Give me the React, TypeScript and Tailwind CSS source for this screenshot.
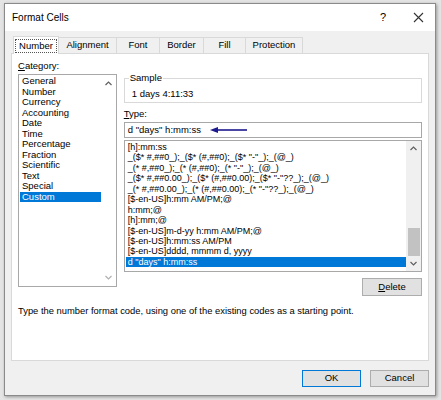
import React from "react";

const categories = [
  "General",
  "Number",
  "Currency",
  "Accounting",
  "Date",
  "Time",
  "Percentage",
  "Fraction",
  "Scientific",
  "Text",
  "Special",
  "Custom",
];

const formats = [
  "[h]:mm:ss",
  '_($* #,##0_);_($* (#,##0);_($* "-"_);_(@_)',
  '_(* #,##0_);_(* (#,##0);_(* "-"_);_(@_)',
  '_($* #,##0.00_);_($* (#,##0.00);_($* "-"??_);_(@_)',
  '_(* #,##0.00_);_(* (#,##0.00);_(* "-"??_);_(@_)',
  "[$-en-US]h:mm AM/PM;@",
  "h:mm;@",
  "[h]:mm;@",
  "[$-en-US]m-d-yy h:mm AM/PM;@",
  "[$-en-US]h:mm:ss AM/PM",
  "[$-en-US]dddd, mmmm d, yyyy",
  'd "days" h:mm:ss',
];

const tabs = ["Number", "Alignment", "Font", "Border", "Fill", "Protection"];
const tabWidths = [46, 58, 43, 44, 42, 57];

function ChevUp() {
  return (
    <svg width="7" height="5" viewBox="0 0 7 5">
      <polyline points="0.5,4 3.5,1 6.5,4" fill="none" stroke="#606060" strokeWidth="1.2" />
    </svg>
  );
}

function ChevDown({ color = "#606060" }: { color?: string }) {
  return (
    <svg width="7" height="5" viewBox="0 0 7 5">
      <polyline points="0.5,1 3.5,4 6.5,1" fill="none" stroke={color} strokeWidth="1.2" />
    </svg>
  );
}

export default function App() {
  return (
    <div className="w-[441px] h-[400px] bg-[#e4e4e4] pl-[4px] pt-[3px] font-['Liberation_Sans',Arial,sans-serif] text-black overflow-hidden">
      <div className="w-[432px] h-[393px] border border-[#8a8a8a] bg-[#f0f0f0] flex flex-col shadow-[1px_1px_3px_rgba(0,0,0,0.35)]">
        {/* Title bar */}
        <div className="h-[27px] bg-white flex items-center pl-[7px] pr-[11px] text-[10px]">
          <span className="flex-1">Format Cells</span>
          <span className="w-[10px] text-center mr-[25px] text-[11px]">?</span>
          <svg width="11" height="11" viewBox="0 0 11 11">
            <path d="M1 1 L10 10 M10 1 L1 10" stroke="#333" strokeWidth="1.1" />
          </svg>
        </div>

        {/* Tabs */}
        <div className="flex items-end pl-[8px] mt-[5px] h-[17px] text-[9.5px]">
          {tabs.map((t, i) =>
            i === 0 ? (
              <div
                key={t}
                className="h-[18px] bg-white border border-b-0 border-[#d9d9d9] flex items-center justify-center relative z-10 -mb-px"
                style={{ width: tabWidths[i] }}
              >
                <span className="border border-dotted border-[#555] px-[3px] leading-[12px]">{t}</span>
              </div>
            ) : (
              <div
                key={t}
                className="h-[16px] bg-[#f0f0f0] border border-b-0 border-l-0 border-[#d9d9d9] flex items-center justify-center"
                style={{ width: tabWidths[i] }}
              >
                {t}
              </div>
            )
          )}
        </div>

        {/* Panel */}
        <div className="ml-[6px] w-[418px] h-[308px] bg-white border border-[#d9d9d9] pt-[5px] px-[6px] text-[9px]">
          <div className="flex gap-[7px]">
            {/* Category column */}
            <div className="w-[99px]">
              <div className="leading-[13px] mb-[2px] text-[9.5px]">
                <span className="underline">C</span>ategory:
              </div>
              <div className="h-[213px] border border-[#a8a8a8] flex text-[9.5px]">
                <div className="flex-1 pt-[1px] pl-[1px]">
                  {categories.map((c) => (
                    <div
                      key={c}
                      className={`h-[10.5px] leading-[10.5px] pl-[2px] ${
                        c === "Custom" ? "bg-[#0078d7] text-white" : ""
                      }`}
                    >
                      {c}
                    </div>
                  ))}
                </div>
                <div className="w-[15px] flex flex-col items-center justify-between py-[6px]">
                  <ChevUp />
                  <ChevDown color="#b0b0b0" />
                </div>
              </div>
            </div>

            {/* Right column */}
            <div className="w-[299px]">
              <div className="mt-[19px] h-[25px] border border-[#d9d9d9] relative text-[9.5px]">
                <span className="absolute -top-[7px] left-[4px] bg-white px-[1px] leading-[12px]">Sample</span>
                <div className="pt-[9px] pl-[7px] leading-[12px]">1 days 4:11:33</div>
              </div>
              <div className="mt-[5px] leading-[12px] text-[9.5px]">
                <span className="underline">T</span>ype:
              </div>
              <div className="mt-[2px] h-[16px] border border-[#a8a8a8] flex items-center pl-[3px] gap-[9px] text-[9.5px]">
                <span>d "days" h:mm:ss</span>
                <svg width="38" height="6" viewBox="0 0 38 6">
                  <path d="M6 3 H37" stroke="#1c1a8c" strokeWidth="1.6" />
                  <path d="M0 3 L8 0 L8 6 Z" fill="#1c1a8c" />
                </svg>
              </div>
              <div className="mt-[2px] h-[132px] border border-[#a8a8a8] flex">
                <div className="flex-1 pt-[1px] pl-[1px]">
                  {formats.map((f, i) => (
                    <div
                      key={i}
                      className={`h-[10.45px] leading-[10.45px] pl-[2px] whitespace-pre ${
                        i === formats.length - 1 ? "bg-[#0078d7] text-white" : ""
                      }`}
                    >
                      {f}
                    </div>
                  ))}
                </div>
                <div className="w-[15px] bg-[#f0f0f0] flex flex-col items-center py-[5px]">
                  <ChevUp />
                  <div className="flex-1" />
                  <div className="w-[12px] h-[28px] bg-[#c2c2c2] mb-[5px]" />
                  <ChevDown />
                </div>
              </div>
              <div className="flex justify-end mt-[6px] text-[9.5px]">
                <div className="w-[60px] h-[18px] bg-[#e1e1e1] border border-[#adadad] flex items-center justify-center">
                  <span>
                    <span className="underline">D</span>elete
                  </span>
                </div>
              </div>
            </div>
          </div>
          <div className="mt-[9px] leading-[12px] text-[9.4px]">
            Type the number format code, using one of the existing codes as a starting point.
          </div>
        </div>

        {/* Buttons */}
        <div className="flex justify-end gap-[9px] pr-[6px] mt-[9px] text-[9.5px]">
          <div className="w-[59px] h-[17px] bg-[#e1e1e1] border border-[#0078d7] flex items-center justify-center">
            OK
          </div>
          <div className="w-[59px] h-[17px] bg-[#e1e1e1] border border-[#adadad] flex items-center justify-center">
            Cancel
          </div>
        </div>
      </div>
    </div>
  );
}
